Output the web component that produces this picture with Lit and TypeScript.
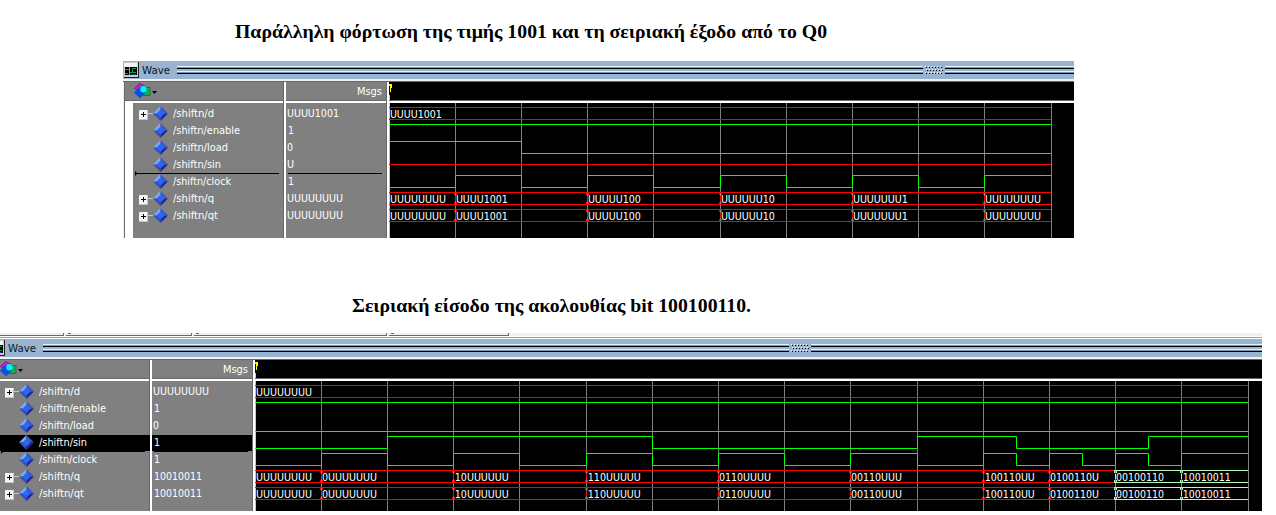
import { LitElement, html, svg, css, nothing } from "lit";
import { customElement, property } from "lit/decorators.js";

type Level = [number, "H" | "L" | "U"];
type Word = [number, string, string?];

interface Signal {
  name: string;
  nameWidth: number;
  value: string;
  expandable?: boolean;
  selected?: boolean;
  levels?: Level[];
  words?: Word[];
}

const RED = "#ff0000";
const GREEN = "#00ff00";
const PALE = "#b0ffb0";

/** Advance width of a bit string: 7px per U, 6px per digit. */
const bitsWidth = (s: string) =>
  [...s].reduce((w, c) => w + (c === "U" ? 7 : 6), 0);

const label = (text: string, width: number) => html`<svg
  class="label"
  width=${width + 2}
  height="17"
>
  <text x="0" y="11" textLength=${width} lengthAdjust="spacingAndGlyphs">${text}</text>
</svg>`;

@customElement("wave-window")
export class WaveWindow extends LitElement {
  @property({ attribute: false }) signals: Signal[] = [];
  @property({ attribute: false }) grid: number[] = [];
  @property({ type: Number }) marker = 3;

  static styles = css`
    :host {
      display: block;
      overflow: hidden;
      font-family: "DejaVu Sans Condensed", "DejaVu Sans", sans-serif;
      font-size: 11px;
      color: #fff;
      background: #000;
    }
    svg {
      display: block;
      flex: none;
    }
    text {
      fill: #fff;
      font-family: "DejaVu Sans Condensed", "DejaVu Sans", sans-serif;
      font-size: 11px;
    }
    .window {
      margin-left: var(--shift, 0px);
    }
    .title {
      display: flex;
      height: 18px;
      background: #99b4d1;
      padding-left: 1px;
    }
    .title text {
      fill: #0c1420;
    }
    .caption {
      margin: 2px 5px 0 3px;
    }
    .rail {
      height: 8px;
      margin-top: 5px;
      background: linear-gradient(
        #dff6ff 0 1px,
        #7f95ad 1px 2px,
        #000 2px 3px,
        #99b4d1 3px 5px,
        #dff6ff 5px 6px,
        #7f95ad 6px 7px,
        #000 7px 8px
      );
    }
    .rail.first {
      width: 746px;
    }
    .rail.last {
      flex: 1;
    }
    .grip {
      margin: 5px 1px 0 2px;
    }
    .edge {
      height: 2px;
      background: #f0f0f0;
      border-bottom: 1px solid #696969;
    }
    .panes {
      display: grid;
      grid-template-columns: 161px 102px 3px 1fr;
    }
    .head {
      box-sizing: border-box;
      height: 21px;
      background: #808080;
      border-bottom: 2px solid #fff;
      box-shadow: inset 0 -1px #696969;
    }
    .names .head {
      padding: 1px 0 0 9px;
    }
    .values .head {
      display: flex;
      justify-content: flex-end;
      padding: 2px 2px 0 0;
    }
    .wave .head {
      background: #000;
    }
    .names {
      border-left: 1px solid #f0f0f0;
      box-shadow: inset 1px 0 #696969;
      padding-left: 1px;
    }
    .values {
      border-left: 2px solid #fff;
      box-shadow: -1px 0 #696969;
    }
    .divider {
      border-left: 1px solid #696969;
      background: #fff;
    }
    .list {
      box-sizing: border-box;
      height: 135px;
      padding-top: 3px;
      background: #808080;
    }
    .names .list {
      border-left: 8px solid #fff;
    }
    .row {
      display: flex;
      height: 17px;
      position: relative;
    }
    .names .row {
      padding-left: 5px;
    }
    .values .row {
      padding-left: 1px;
    }
    .values .digits {
      padding-left: 1px;
    }
    .names .label {
      margin-left: 5px;
    }
    .insertion {
      position: absolute;
      left: 2px;
      right: 4px;
      bottom: 0;
      height: 1px;
      background: #000;
    }
    .names .insertion {
      right: 5px;
    }
    .names .insertion::before {
      content: "";
      position: absolute;
      left: 0;
      top: -2px;
      border-left: 2px solid #000;
      border-top: 2px solid transparent;
      border-bottom: 2px solid transparent;
      height: 1px;
    }
    .row.selected {
      background: linear-gradient(#000 0 16px, #808080 16px);
    }
  `;

  private get end() {
    return this.grid[this.grid.length - 1];
  }

  private windowIcon() {
    return html`<svg width="15" height="18" shape-rendering="crispEdges">
      <rect x="0" y="1" width="15" height="16" fill="#202020" />
      <rect x="0" y="1" width="14" height="15" fill="#c8c8c8" />
      <rect x="0" y="2" width="13" height="4" fill="#f4f4f4" />
      <rect x="1" y="6" width="12" height="8" fill="#000" />
      <path d="M1 8.500h4v3h3M8 7.500h4M8.500 8v3M8 11.500h4M1 12.500h3" stroke="#08a048" fill="none" />
      <path d="M5.500 6v8" stroke="#30d0d8" />
      <path d="M7 13.500h5" stroke="#3828a0" />
    </svg>`;
  }

  private shapesIcon() {
    return html`<svg width="24" height="17">
      <path d="M0.500 5.500L5.500 0.500L12 4L6 9z" fill="#c81ae0" stroke="#5c1470" stroke-width=".7" />
      <rect x="9" y="4.500" width="7" height="8" fill="#10b050" stroke="#087030" stroke-width=".7" />
      <path d="M0 9.500L6 3.800L12 9.500L6 15.200z" fill="#0850e0" />
      <circle cx="9.400" cy="6.200" r="3.200" fill="#00f0ff" />
      <path d="M18 8h5l-2.500 3z" fill="#000" />
    </svg>`;
  }

  private nodeIcon(expandable = false) {
    return html`<svg width="30" height="17">
      ${expandable
        ? svg`<path d="M10 7.500h5" stroke="#c8c8c8" />
            <rect x="1" y="4" width="9" height="10" rx="1" fill="#f4f5f8" />
            <path d="M1 13.500h9M9.500 5v8" stroke="#c0c4d0" />
            <path d="M3 8.500h5M5.500 6v5" stroke="#000" />`
        : nothing}
      <path d="M22.500 0L15 7.500H22.500z" fill="#7fa8f4" />
      <path d="M22.500 0L30 7.500H22.500z" fill="#3c58c4" />
      <path d="M15 7.500L22.500 15V7.500z" fill="#3450b8" />
      <path d="M30 7.500L22.500 15V7.500z" fill="#24249c" />
      <path d="M22.500 3.500L26.500 7.500L22.500 11.500L18.500 7.500z" fill="#2a68f4" />
    </svg>`;
  }

  private grip() {
    const dots = [];
    for (let r = 0; r < 3; r++)
      for (let i = 0; i < 6; i++) {
        const x = i * 3 + (r === 1 ? 1 : 0);
        dots.push(svg`<rect x=${x} y=${r * 3} width="1" height="1" fill="#fff" />
          <rect x=${x + 1} y=${r * 3 + 1} width="1" height="1" fill="#000" />`);
      }
    return html`<svg class="grip" width="19" height="9" shape-rendering="crispEdges">${dots}</svg>`;
  }

  private levelTrace(levels: Level[], row: number) {
    const y = { H: 4.5, U: 10.5, L: 16.5 };
    const top = row * 17;
    let d = `M0 ${top + y[levels[0][1]]}`;
    for (const [x, v] of levels.slice(1)) d += `H${x + 0.5}V${top + y[v]}`;
    d += `H${this.end}`;
    return svg`<path d=${d} fill="none" stroke=${levels[0][1] === "U" ? RED : GREEN} />`;
  }

  private wordTrace(words: Word[], row: number) {
    const t = row * 17 + 4;
    return words.map(([x, bits, color = RED], i) => {
      const stop = words[i + 1]?.[0] ?? this.end;
      return svg`
        <path d=${`M${x} ${t + 0.5}H${stop}M${x} ${t + 12.5}H${stop}`} stroke=${color} fill="none" />
        ${i
          ? svg`<path stroke=${color} fill="none"
              d=${`M${x - 0.5} ${t}v3M${x + 1.5} ${t}v3M${x + 0.5} ${t + 4}v5M${x - 0.5} ${t + 10}v3M${x + 1.5} ${t + 10}v3`} />`
          : nothing}
        <text x=${x + (bits[0] === "1" ? 1.8 : 0.9)} y=${t + 11} textLength=${bitsWidth(bits)} lengthAdjust="spacingAndGlyphs">${bits}</text>`;
    });
  }

  render() {
    return html`<div class="window">
      <div class="title">
        ${this.windowIcon()}
        <div class="caption">${label("Wave", 28)}</div>
        <div class="rail first"></div>
        ${this.grip()}
        <div class="rail last"></div>
      </div>
      <div class="edge"></div>
      <div class="panes">
        <div class="names">
          <div class="head">${this.shapesIcon()}</div>
          <div class="list">
            ${this.signals.map(
              (s, i) => html`<div class="row ${s.selected ? "selected" : ""}">
                ${this.nodeIcon(s.expandable)} ${label(s.name, s.nameWidth)}
                ${i === this.marker ? html`<div class="insertion"></div>` : nothing}
              </div>`
            )}
          </div>
        </div>
        <div class="values">
          <div class="head">${label("Msgs", 25)}</div>
          <div class="list">
            ${this.signals.map(
              (s, i) => html`<div class="row ${s.selected ? "selected" : ""}">
                <div class=${s.value[0] === "1" ? "digits" : ""}>
                  ${label(s.value, bitsWidth(s.value))}
                </div>
                ${i === this.marker ? html`<div class="insertion"></div>` : nothing}
              </div>`
            )}
          </div>
        </div>
        <div class="divider"></div>
        <div class="wave">
          <div class="head">
            <svg width="4" height="18" shape-rendering="crispEdges">
              <path d="M1 2h2v4h-1v4h-1z" fill="#ffff00" />
              <path d="M0.500 2v2M0.500 13v5" stroke="#ffd800" />
            </svg>
          </div>
          <svg width=${this.end + 1} height="135">
            <g shape-rendering="crispEdges">
              ${this.grid.map((x) => svg`<rect x=${x} y="0" width="1" height="135" fill="#808080" />`)}
              <rect x="0" y="0" width="1" height="135" fill="#ffd000" />
            </g>
            ${this.signals.map((s, i) =>
              s.levels ? this.levelTrace(s.levels, i) : this.wordTrace(s.words ?? [], i)
            )}
          </svg>
        </div>
      </div>
    </div>`;
  }
}

const loadWords: Word[] = [
  [0, "UUUUUUUU"],
  [66, "UUUU1001"],
  [198, "UUUUU100"],
  [331, "UUUUUU10"],
  [463, "UUUUUUU1"],
  [595, "UUUUUUUU"],
];

const serialWords: Word[] = [
  [0, "UUUUUUUU"],
  [66, "0UUUUUUU"],
  [198, "10UUUUUU"],
  [331, "110UUUUU"],
  [463, "0110UUUU"],
  [595, "00110UUU"],
  [728, "100110UU"],
  [794, "0100110U"],
  [860, "00100110", PALE],
  [926, "10010011", PALE],
];

/** A clock that starts low and toggles at each given position. */
const clock = (edges: number[]): Level[] => [
  [0, "L"],
  ...edges.map((x, i): Level => [x, i % 2 ? "L" : "H"]),
];

const parallelLoad: Signal[] = [
  { name: "/shiftn/d", nameWidth: 41, value: "UUUU1001", expandable: true, words: [[0, "UUUU1001"]] },
  { name: "/shiftn/enable", nameWidth: 67, value: "1", levels: [[0, "H"]] },
  { name: "/shiftn/load", nameWidth: 55, value: "0", levels: [[0, "H"], [132, "L"]] },
  { name: "/shiftn/sin", nameWidth: 48, value: "U", levels: [[0, "U"]] },
  { name: "/shiftn/clock", nameWidth: 58, value: "1", levels: clock([66, 132, 198, 264, 331, 397, 463, 529, 595]) },
  { name: "/shiftn/q", nameWidth: 41, value: "UUUUUUUU", expandable: true, words: loadWords },
  { name: "/shiftn/qt", nameWidth: 45, value: "UUUUUUUU", expandable: true, words: loadWords },
];

const serialInput: Signal[] = [
  { name: "/shiftn/d", nameWidth: 41, value: "UUUUUUUU", expandable: true, words: [[0, "UUUUUUUU"]] },
  { name: "/shiftn/enable", nameWidth: 67, value: "1", levels: [[0, "H"]] },
  { name: "/shiftn/load", nameWidth: 55, value: "0", levels: [[0, "L"]] },
  {
    name: "/shiftn/sin", nameWidth: 48, value: "1", selected: true,
    levels: [[0, "L"], [132, "H"], [397, "L"], [662, "H"], [761, "L"], [893, "H"]],
  },
  {
    name: "/shiftn/clock", nameWidth: 58, value: "1",
    levels: clock([66, 132, 198, 264, 331, 397, 463, 529, 595, 662, 728, 761, 794, 827, 860, 893, 926]),
  },
  { name: "/shiftn/q", nameWidth: 41, value: "10010011", expandable: true, words: serialWords },
  { name: "/shiftn/qt", nameWidth: 45, value: "10010011", expandable: true, words: serialWords },
];

const loadGrid = [66, 132, 198, 264, 331, 397, 463, 529, 595, 662];
const serialGrid = [...loadGrid, 728, 794, 860, 926, 993];

@customElement("app-root")
export class AppRoot extends LitElement {
  static styles = css`
    :host {
      display: block;
      width: 1276px;
      height: 515px;
      overflow: hidden;
      background: #fff;
    }
    h2 {
      margin: 0;
      font: bold 19.78px/24px "Liberation Serif", serif;
      color: #000;
      white-space: nowrap;
    }
    .first-title {
      padding: 19px 0 18px 235px;
    }
    .second-title {
      padding: 55px 0 16px 352px;
    }
    .load {
      width: 951px;
      height: 177px;
      margin-left: 123px;
    }
    .serial {
      --shift: -11px;
      width: 1262px;
      height: 172px;
    }
    .tabs {
      display: flex;
      gap: 2px;
      width: 1262px;
      height: 3px;
      background: #f0f0f0;
      margin-bottom: 1px;
    }
    .tab {
      box-sizing: border-box;
      border: solid #696969;
      border-width: 0 1px 1px 0;
      padding-left: 2px;
    }
    .tab::before {
      content: "";
      display: block;
      width: 3px;
      height: 1px;
      background: #696969;
    }
    .t0 { width: 64px; }
    .t0::before { display: none; }
    .t1 { width: 126px; }
    .t2 { width: 193px; }
    .t3 { width: 120px; }
    .rule {
      width: 1262px;
      height: 1px;
      background: #a0a0a0;
      margin-bottom: 1px;
    }
  `;

  render() {
    return html`
      <h2 class="first-title">Παράλληλη φόρτωση της τιμής 1001 και τη σειριακή έξοδο από το Q0</h2>
      <wave-window class="load" .signals=${parallelLoad} .grid=${loadGrid}></wave-window>
      <h2 class="second-title">Σειριακή είσοδο της ακολουθίας bit 100100110.</h2>
      <div class="tabs">
        <div class="tab t0"></div>
        <div class="tab t1"></div>
        <div class="tab t2"></div>
        <div class="tab t3"></div>
      </div>
      <div class="rule"></div>
      <wave-window class="serial" .signals=${serialInput} .grid=${serialGrid}></wave-window>
    `;
  }
}
